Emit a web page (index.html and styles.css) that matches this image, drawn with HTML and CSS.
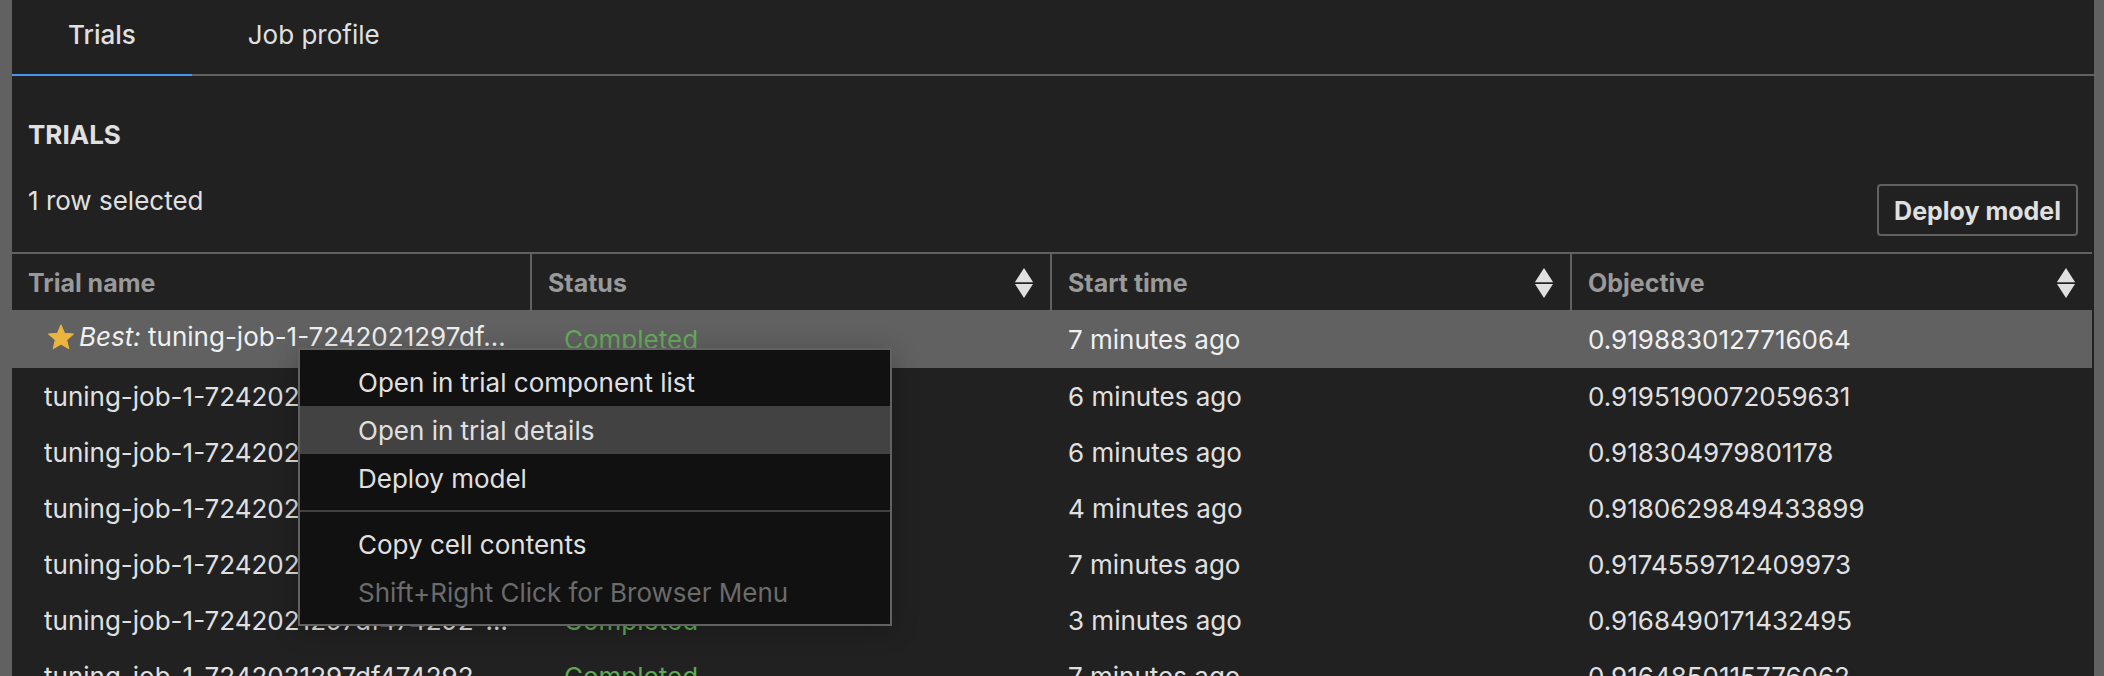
FILE: index.html
```html
<!DOCTYPE html>
<html lang="en">
<head>
<meta charset="utf-8">
<title>Trials</title>
<link rel="stylesheet" href="styles.css">
</head>
<body>
<svg class="defs" aria-hidden="true">
  <symbol id="sort" viewBox="0 0 18 30"><path d="M9 0 18 14H0zM0 16H18L9 30z" fill="currentColor"/><path d="M0 14.5H18" stroke="#555" stroke-width="1"/></symbol>
</svg>
<main class="panel">
  <nav class="tabs" role="tablist">
    <button class="tab tab-active" role="tab" aria-selected="true">Trials</button>
    <button class="tab" role="tab" aria-selected="false">Job profile</button>
  </nav>
  <section class="content">
    <h2 class="title">TRIALS</h2>
    <div class="toolbar">
      <p class="selection">1 row selected</p>
      <button class="deploy">Deploy model</button>
    </div>
    <table class="trials">
      <thead>
        <tr>
          <th scope="col"><div class="head">Trial name</div></th>
          <th scope="col"><div class="head">Status <svg class="sort"><use href="#sort"/></svg></div></th>
          <th scope="col"><div class="head">Start time <svg class="sort"><use href="#sort"/></svg></div></th>
          <th scope="col"><div class="head">Objective <svg class="sort"><use href="#sort"/></svg></div></th>
        </tr>
      </thead>
      <tbody>
        <tr class="selected"><td class="name"><div class="best"><svg class="star" viewBox="0 0 24 24"><path d="M12 1 15.2 8.6 23.4 9.300 17.200 14.700 19.100 22.700 12 18.400 4.900 22.700 6.800 14.700 .6 9.300 8.800 8.600Z" fill="#ebb53f" stroke="#ebb53f" stroke-width="1" stroke-linejoin="round"/></svg><span><em>Best:</em> tuning-job-1-7242021297df…</span></div></td><td class="status">Completed</td><td>7 minutes ago</td><td>0.9198830127716064</td></tr>
        <tr><td class="name">tuning-job-1-7242021297df474292-…</td><td class="status">Completed</td><td>6 minutes ago</td><td>0.9195190072059631</td></tr>
        <tr><td class="name">tuning-job-1-7242021297df474292-…</td><td class="status">Completed</td><td>6 minutes ago</td><td>0.918304979801178</td></tr>
        <tr><td class="name">tuning-job-1-7242021297df474292-…</td><td class="status">Completed</td><td>4 minutes ago</td><td>0.9180629849433899</td></tr>
        <tr><td class="name">tuning-job-1-7242021297df474292-…</td><td class="status">Completed</td><td>7 minutes ago</td><td>0.9174559712409973</td></tr>
        <tr><td class="name">tuning-job-1-7242021297df474292-…</td><td class="status">Completed</td><td>3 minutes ago</td><td>0.9168490171432495</td></tr>
        <tr><td class="name">tuning-job-1-7242021297df474292-…</td><td class="status">Completed</td><td>7 minutes ago</td><td>0.9164850115776062</td></tr>
      </tbody>
    </table>
  </section>
</main>
<div class="menu" role="menu">
  <button class="item" role="menuitem">Open in trial component list</button>
  <button class="item item-active" role="menuitem">Open in trial details</button>
  <button class="item" role="menuitem">Deploy model</button>
  <hr class="divider">
  <button class="item" role="menuitem">Copy cell contents</button>
  <button class="item" role="menuitem" disabled>Shift+Right Click for Browser Menu</button>
</div>
</body>
</html>
```
FILE: styles.css
```css
* { box-sizing: border-box; }

body {
  margin: 0;
  height: 100vh;
  overflow: hidden;
  background: #616161;
  color: #e0e0e0;
  font: 26px/32px Inter, "Liberation Sans", sans-serif;
}

button {
  font: inherit;
  color: inherit;
  background: none;
  border: 0;
}

.defs { position: absolute; width: 0; height: 0; }

.panel {
  margin: 0 10px 0 12px;
  min-height: 100vh;
  background: #212121;
}

.tabs {
  display: flex;
  border-bottom: 2px solid #616161;
}

.tab {
  margin-bottom: -2px;
  padding: 19px 56px 23px;
  border-bottom: 2px solid transparent;
}

.tab-active {
  border-bottom-color: #4397ef;
  font-weight: 500;
}

.content { padding: 43px 2px 0 0; }

.title {
  margin: 0;
  padding: 0 16px;
  font-size: 26px;
  line-height: 32px;
  font-weight: 700;
}

.toolbar {
  display: flex;
  justify-content: space-between;
  align-items: flex-end;
  padding: 33px 14px 16px 16px;
}

.selection {
  margin: 0;
  padding-top: 1px;
  align-self: flex-start;
}

.deploy {
  padding: 12px 15px 10px;
  border: 2px solid #616161;
  border-radius: 4px;
  font-size: 25px;
  line-height: 26px;
  font-weight: 700;
}

.trials {
  width: 100%;
  table-layout: fixed;
  border-collapse: separate;
  border-spacing: 0;
  border-top: 2px solid #616161;
  white-space: nowrap;
}

th {
  height: 56px;
  padding: 1px 17px 0 16px;
  border-right: 2px solid #616161;
  color: #999;
  font-size: 25px;
  font-weight: 700;
  text-align: left;
}

th:last-child { border-right: 0; }

.head {
  display: flex;
  justify-content: space-between;
  align-items: center;
}

.sort {
  width: 18px;
  height: 30px;
  color: #e0e0e0;
}

td {
  height: 56px;
  padding: 2px 16px 0;
}

.name { padding: 2px 0 0 32px; }
.status { padding-left: 32px; color: #5faa55; }

.selected td {
  height: 58px;
  background: #616161;
  color: #f0f0f0;
}

.selected .status { color: #66aa5b; }

.best {
  display: flex;
  align-items: center;
  gap: 5px;
  padding: 0 0 6px 4px;
}

.star {
  width: 26px;
  height: 26px;
}

.menu {
  position: absolute;
  left: 298px;
  top: 348px;
  width: 594px;
  padding: 8px 0;
  background: #111;
  border: 2px solid #616161;
  box-shadow: 0 4px 24px rgba(0, 0, 0, 0.25);
}

.item {
  display: block;
  width: 100%;
  padding: 9px 58px 7px;
  text-align: left;
}

.item-active { background: #424242; }
.item:disabled { color: #6b6b6b; }

.divider {
  margin: 8px 0;
  border: 0;
  border-top: 2px solid #424242;
}
```
